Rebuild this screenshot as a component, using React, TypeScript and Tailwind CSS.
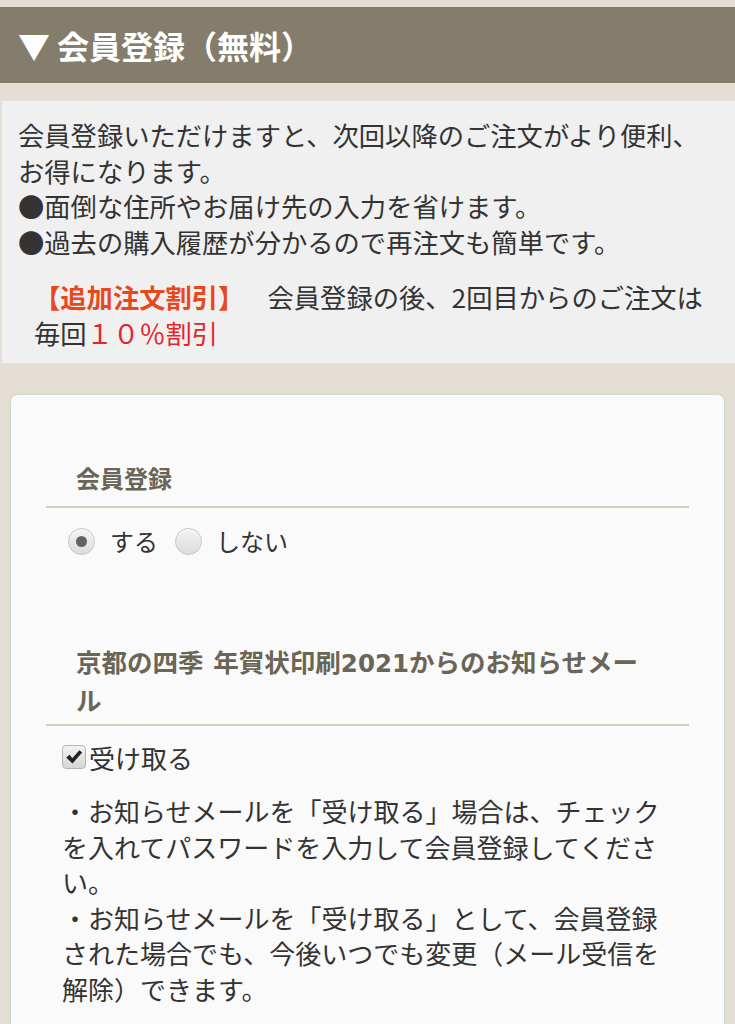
import React from "react";

function Radio({ checked }: { checked?: boolean }) {
  return (
    <span className="flex h-[27px] w-[27px] shrink-0 items-center justify-center rounded-full border border-[#c4c4c4] bg-gradient-to-b from-[#f4f4f4] to-[#dcdcdc] shadow-[inset_0_1px_1px_rgba(255,255,255,0.8)]">
      {checked && <span className="block h-[11px] w-[11px] rounded-full bg-[#626262]" />}
    </span>
  );
}

function CheckBox() {
  return (
    <span className="flex h-[24px] w-[24px] shrink-0 items-center justify-center rounded-[4px] border border-[#b5b5b5] bg-gradient-to-b from-[#f2f2f2] to-[#d6d6d6]">
      <svg width="18" height="16" viewBox="0 0 18 16">
        <path d="M1.2 8.6 L4.6 5.8 L7.3 9.2 L14.4 1.2 L17.2 3.6 L7.5 14.6 Z" fill="#222" />
      </svg>
    </span>
  );
}

export default function App() {
  return (
    <div className="min-h-[1024px] bg-[#e4dfd5] pt-[7px] font-['Noto_Sans_CJK_JP','Noto_Sans',sans-serif] text-[#333333]">
      <div className="flex h-[76px] items-center bg-[#857d6c] pl-[18px] text-[32px] font-bold text-white">
        <span className="mr-[7px]">▼</span>会員登録（無料）
      </div>

      <div className="ml-[2px] mt-[18px] bg-[#f0f0f0] pb-[13px] pl-[16px] pr-[10px] pt-[16px] text-[26.3px] leading-[35.5px]">
        <p>
          会員登録いただけますと、次回以降のご注文がより便利、
          <br />
          お得になります。
          <br />
          ●面倒な住所やお届け先の入力を省けます。
          <br />
          ●過去の購入履歴が分かるので再注文も簡単です。
        </p>
        <p className="mt-[20px] pl-[16px]">
          <span className="font-bold text-[#e8481d]">【追加注文割引】</span>
          <span className="ml-[10px]">　</span>会員登録の後、2回目からのご注文は
          <br />
          毎回<span className="text-[#e1262c]">１０％割引</span>
        </p>
      </div>

      <div className="mx-[11px] mt-[32px] rounded-t-[6px] bg-[#fafafa] px-[35px] pb-[40px] pt-[65px] shadow-[0_0_3px_rgba(0,0,0,0.12)]">
        <h2 className="border-b-2 border-[#d6cdbd] pb-[10px] pl-[30px] text-[24px] font-bold leading-[36px] text-[#6a6556]">
          会員登録
        </h2>
        <div className="mt-[15px] flex h-[36px] items-center pl-[22px] text-[24px]">
          <Radio checked />
          <span className="ml-[15px]">する</span>
          <span className="ml-[17px]">
            <Radio />
          </span>
          <span className="ml-[14px]">しない</span>
        </div>

        <h2 className="mt-[84px] border-b-2 border-[#d6cdbd] pb-[8px] pl-[30px] text-[25.5px] font-bold leading-[35px] text-[#6a6556]">
          京都の四季<span className="ml-[4px]"> </span>年賀状印刷
          <span className="font-['DejaVu_Sans',sans-serif] text-[24.5px]">2021</span>
          からのお知らせメー
          <br />
          ル
        </h2>
        <div className="mt-[13px] flex h-[36px] items-center pl-[16px] text-[26px]">
          <CheckBox />
          <span className="ml-[3px]">受け取る</span>
        </div>
        <p className="mt-[18px] pl-[16px] pr-[4px] text-[26px] leading-[35.5px]">
          ・お知らせメールを「受け取る」場合は、チェック
          <br />
          を入れてパスワードを入力して会員登録してくださ
          <br />
          い。
          <br />
          ・お知らせメールを「受け取る」として、会員登録
          <br />
          された場合でも、今後いつでも変更（メール受信を
          <br />
          解除）できます。
        </p>
      </div>
    </div>
  );
}
